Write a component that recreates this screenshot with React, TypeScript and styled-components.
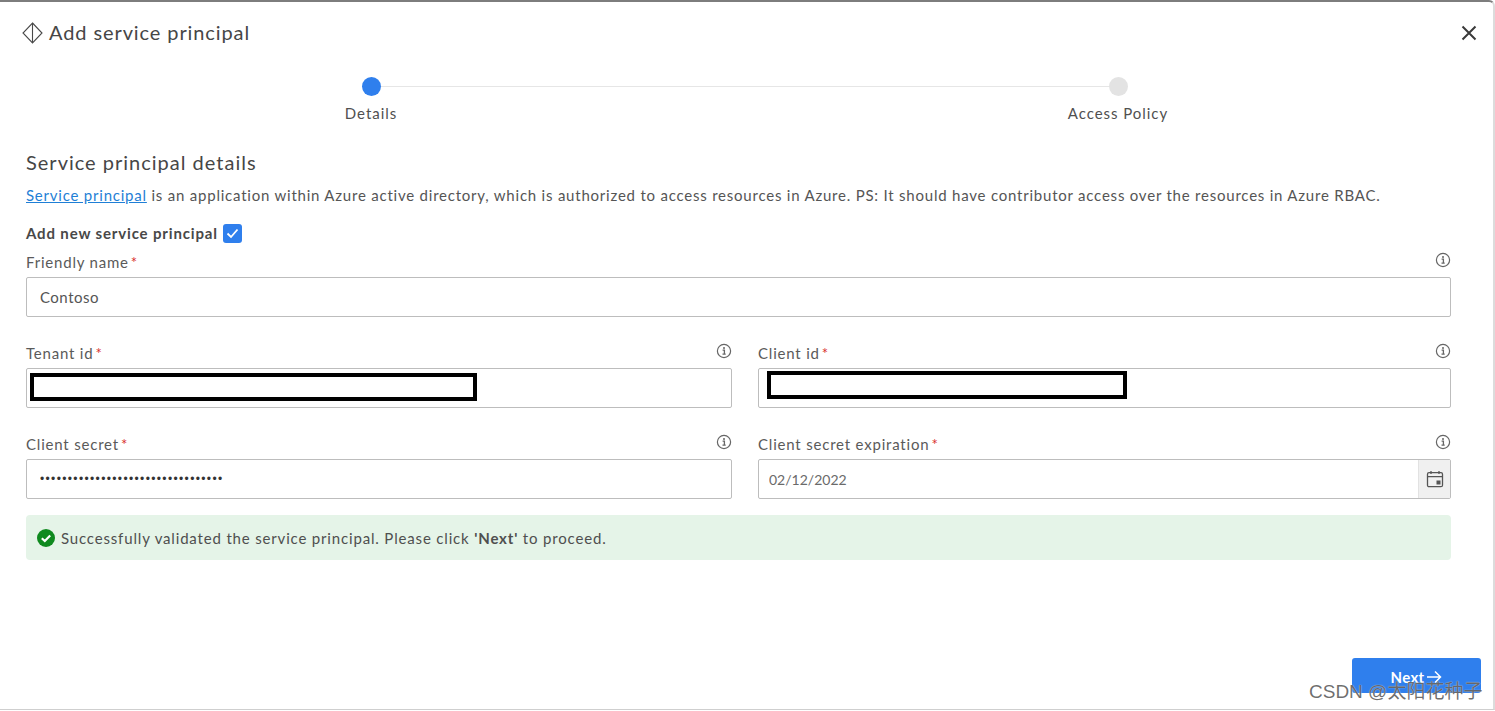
import React from 'react'
import styled, { createGlobalStyle } from 'styled-components'

const GlobalStyle = createGlobalStyle`
  html, body {
    margin: 0;
    padding: 0;
    height: 100%;
    overflow: hidden;
    background: #ffffff;
  }
  body, input, button {
    font-family: Lato, "Open Sans", sans-serif;
  }
`

const Dialog = styled.div`
  position: relative;
  box-sizing: border-box;
  width: 1495px;
  height: 710px;
  border-top: 2px solid #7d7d7d;
  border-right: 2px solid #dcdcdc;
  border-bottom: 1px solid #cfcfcf;
  border-top-right-radius: 6px;
  overflow: hidden;
  background: #fff;
  color: #484644;
`

const Header = styled.header`
  display: flex;
  align-items: center;
  height: 62px;
  padding: 0 14px 0 22px;
  gap: 6px;
`

const Title = styled.h1`
  flex: 1;
  margin: 0 0 2px;
  font-size: 20px;
  font-weight: 400;
  letter-spacing: 0.9px;
  color: #464646;
`

const CloseButton = styled.button`
  display: flex;
  padding: 0;
  border: none;
  background: none;
  color: #3a3a3a;
`

const Stepper = styled.ol`
  position: relative;
  display: grid;
  grid-template-columns: 400px 400px;
  column-gap: 347px;
  margin: 13px 0 0;
  padding: 0 0 0 171px;
  list-style: none;

  &::before {
    content: '';
    position: absolute;
    top: 9px;
    left: 371px;
    width: 747px;
    height: 1px;
    background: #e6e6e6;
  }
`

const Step = styled.li`
  position: relative;
  display: flex;
  flex-direction: column;
  align-items: center;
  gap: 8px;
  font-size: 15px;
  line-height: 18px;
  letter-spacing: 0.95px;
  color: #505050;
`

const StepDot = styled.span<{ $active?: boolean }>`
  width: 19px;
  height: 19px;
  border-radius: 50%;
  background: ${p => (p.$active ? '#2f7fed' : '#e3e3e3')};
`

const Body = styled.main`
  padding: 28px 42px 0 26px;
`

const SectionTitle = styled.h2`
  margin: 0;
  font-size: 20px;
  line-height: 24px;
  font-weight: 400;
  letter-spacing: 1px;
  color: #464646;
`

const Intro = styled.p`
  margin: 11px 0 0;
  font-size: 15px;
  line-height: 20px;
  letter-spacing: 0.78px;
  white-space: nowrap;
  color: #555;

  a {
    color: #1f7fd6;
    text-decoration: underline;
  }
`

const CheckRow = styled.div`
  display: flex;
  align-items: center;
  gap: 5px;
  margin-top: 18px;
  height: 20px;
  font-size: 15px;
  font-weight: 700;
  letter-spacing: 0.85px;
  color: #484848;
`

const CheckBox = styled.span`
  display: flex;
  align-items: center;
  justify-content: center;
  width: 19px;
  height: 19px;
  border-radius: 3px;
  background: #2f7fed;
  color: #fff;
`

const FieldGrid = styled.div`
  display: grid;
  grid-template-columns: 706px 693px;
  column-gap: 26px;
  row-gap: 26px;
  margin-top: 9px;
`

const Field = styled.div<{ $wide?: boolean }>`
  grid-column: ${p => (p.$wide ? '1 / -1' : 'auto')};
  position: relative;
`

const LabelRow = styled.div`
  display: flex;
  align-items: flex-start;
  justify-content: space-between;
  height: 25px;
`

const Label = styled.label`
  font-size: 15px;
  line-height: 20px;
  letter-spacing: 0.8px;
  color: #5a5a5a;

  i {
    margin-left: 2px;
    font-style: normal;
    color: #d9302c;
  }
`

const InfoIcon = styled.svg`
  color: #666;
`

const InputFrame = styled.div`
  position: relative;
  display: flex;
  box-sizing: border-box;
  height: 40px;
  border: 1px solid #bdbdbd;
  border-radius: 2px;
  background: #fff;
`

const TextInput = styled.input<{ $muted?: boolean }>`
  flex: 1;
  min-width: 0;
  box-sizing: border-box;
  padding: 0 0 0 ${p => (p.$muted ? '10px' : '13px')};
  border: none;
  outline: none;
  background: transparent;
  font-size: ${p => (p.$muted ? '14px' : '15px')};
  letter-spacing: ${p => (p.$muted ? '0' : '0.5px')};
  color: ${p => (p.$muted ? '#6a6a6a' : '#555')};
`

const SecretInput = styled(TextInput)`
  font-family: "Liberation Sans", sans-serif;
  font-size: 12px;
  letter-spacing: 1.36px;
  color: #333;
`

const Redaction = styled.span<{ $left: number; $top: number; $width: number }>`
  position: absolute;
  left: ${p => p.$left}px;
  top: ${p => p.$top}px;
  box-sizing: border-box;
  width: ${p => p.$width}px;
  height: 28px;
  border: 4px solid #000;
  background: #fff;
`

const CalendarAddon = styled.span`
  display: flex;
  align-items: center;
  justify-content: center;
  width: 31px;
  background: #f0f0f0;
  border-left: 1px solid #e2e2e2;
  color: #555;
`

const Alert = styled.div`
  display: flex;
  align-items: center;
  gap: 6px;
  box-sizing: border-box;
  height: 45px;
  margin-top: 16px;
  padding: 0 0 0 11px;
  border-radius: 4px;
  background: #e5f4e8;
  font-size: 15px;
  letter-spacing: 0.83px;
  color: #4f4f4f;

  b {
    font-weight: 700;
  }
`

const NextButton = styled.button`
  position: absolute;
  right: 12px;
  top: 656px;
  display: flex;
  align-items: center;
  justify-content: center;
  gap: 2px;
  width: 129px;
  height: 35px;
  padding: 2px 0 0;
  border: none;
  border-radius: 3px;
  background: #2f7fed;
  color: #fff;
  font-size: 15px;
  font-weight: 700;
  letter-spacing: 0.3px;
`

const Watermark = styled.span`
  position: absolute;
  left: 1309px;
  top: 678px;
  font-family: "Liberation Sans", "Noto Sans CJK SC", sans-serif;
  font-size: 19px;
  line-height: 24px;
  white-space: nowrap;
  color: rgba(70, 70, 70, 0.78);
  text-shadow: 0 0 1px rgba(255, 255, 255, 0.9);
`

const Info = () => (
  <InfoIcon width="16" height="16" viewBox="0 0 16 16" fill="none" stroke="currentColor" aria-hidden="true">
    <circle cx="8" cy="8" r="6.6" strokeWidth="1.2" />
    <circle cx="8" cy="4.9" r="1" fill="currentColor" stroke="none" />
    <path d="M6.6 7.2H8.4V11M6.5 11.2H9.7" strokeWidth="1.3" />
  </InfoIcon>
)

interface FormFieldProps {
  label: string
  wide?: boolean
  children: React.ReactNode
}

const FormField: React.FC<FormFieldProps> = ({ label, wide, children }) => (
  <Field $wide={wide}>
    <LabelRow>
      <Label>
        {label}
        <i>*</i>
      </Label>
      <Info />
    </LabelRow>
    <InputFrame>{children}</InputFrame>
  </Field>
)

const App: React.FC = () => {
  return (
    <>
      <GlobalStyle />
      <Dialog>
        <Header>
          <svg width="21" height="22" viewBox="0 0 21 22" fill="none" stroke="#4a4a4a" strokeWidth="1.1" aria-hidden="true">
            <path d="M10.5 1L20 11L10.5 21L1 11Z" />
            <path d="M10.5 1V21" />
          </svg>
          <Title>Add service principal</Title>
          <CloseButton aria-label="Close">
            <svg width="20" height="20" viewBox="0 0 20 20" fill="none" stroke="currentColor" strokeWidth="2" aria-hidden="true">
              <path d="M3.5 3.5L16.5 16.5M16.5 3.5L3.5 16.5" />
            </svg>
          </CloseButton>
        </Header>

        <Stepper>
          <Step>
            <StepDot $active />
            Details
          </Step>
          <Step>
            <StepDot />
            Access Policy
          </Step>
        </Stepper>

        <Body>
          <SectionTitle>Service principal details</SectionTitle>
          <Intro>
            <a href="#sp">Service principal</a> is an application within Azure active directory, which is authorized to access resources in Azure. PS: It should have contributor access over the resources in Azure RBAC.
          </Intro>
          <CheckRow>
            Add new service principal
            <CheckBox>
              <svg width="13" height="11" viewBox="0 0 13 11" fill="none" stroke="currentColor" strokeWidth="1.8" aria-hidden="true">
                <path d="M1.5 5.5L5 9L11.5 1.5" />
              </svg>
            </CheckBox>
          </CheckRow>

          <FieldGrid>
            <FormField label="Friendly name" wide>
              <TextInput value="Contoso" readOnly />
            </FormField>
            <FormField label="Tenant id">
              <TextInput readOnly />
              <Redaction $left={3} $top={4} $width={447} />
            </FormField>
            <FormField label="Client id">
              <TextInput readOnly />
              <Redaction $left={8} $top={2} $width={360} />
            </FormField>
            <FormField label="Client secret">
              <SecretInput type="password" value="•••••••••••••••••••••••••••••••••" readOnly />
            </FormField>
            <FormField label="Client secret expiration">
              <TextInput $muted value="02/12/2022" readOnly />
              <CalendarAddon>
                <svg width="18" height="18" viewBox="0 0 18 18" fill="none" stroke="currentColor" strokeWidth="1.3" aria-hidden="true">
                  <rect x="1.5" y="2.7" width="15" height="14" rx="1.5" />
                  <path d="M1.5 6.6H16.5M5 1V4M13 1V4" />
                  <rect x="10.5" y="10.5" width="4" height="4" fill="currentColor" stroke="none" />
                </svg>
              </CalendarAddon>
            </FormField>
          </FieldGrid>

          <Alert>
            <svg width="18" height="18" viewBox="0 0 18 18" aria-hidden="true">
              <circle cx="9" cy="9" r="9" fill="#0f8a1f" />
              <path d="M4.8 9.2L7.8 12L13.2 6.4" fill="none" stroke="#fff" strokeWidth="2.2" />
            </svg>
            <span>
              Successfully validated the service principal. Please click <b>'Next'</b> to proceed.
            </span>
          </Alert>
        </Body>

        <NextButton>
          Next
          <svg width="16" height="14" viewBox="0 0 16 14" fill="none" stroke="currentColor" strokeWidth="1.5" aria-hidden="true">
            <path d="M1 7H14.5M9 1.5L14.5 7L9 12.5" />
          </svg>
        </NextButton>
        <Watermark>CSDN @太阳花种子</Watermark>
      </Dialog>
    </>
  )
}

export default App
